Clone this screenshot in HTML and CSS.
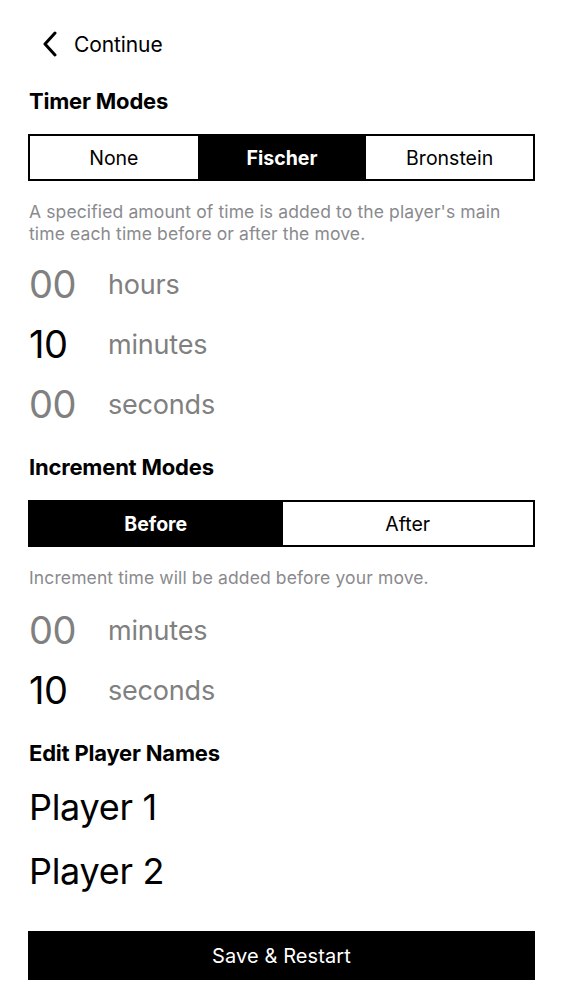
FILE: index.html
```html
<!DOCTYPE html>
<html lang="en">
<head>
<meta charset="utf-8">
<title>Settings</title>
<link rel="stylesheet" href="styles.css">
</head>
<body>
<div class="screen">
  <header class="nav">
    <svg class="chevron" width="18" height="26" viewBox="0 0 18 26" aria-hidden="true">
      <path d="M14 2 L4 13 L14 24" fill="none" stroke="#000" stroke-width="3" stroke-linecap="round" stroke-linejoin="round"/>
    </svg>
    <span class="nav-title">Continue</span>
  </header>

  <h2 class="section-title first">Timer Modes</h2>
  <div class="segmented three">
    <div class="seg">None</div>
    <div class="seg active">Fischer</div>
    <div class="seg">Bronstein</div>
  </div>
  <p class="desc">A specified amount of time is added to the player's main time each time before or after the move.</p>

  <div class="rows rows-main">
    <div class="row"><span class="num muted">00</span><span class="unit">hours</span></div>
    <div class="row"><span class="num">10</span><span class="unit">minutes</span></div>
    <div class="row"><span class="num muted">00</span><span class="unit">seconds</span></div>
  </div>

  <h2 class="section-title title-gap">Increment Modes</h2>
  <div class="segmented two">
    <div class="seg active">Before</div>
    <div class="seg">After</div>
  </div>
  <p class="desc">Increment time will be added before your move.</p>

  <div class="rows rows-inc">
    <div class="row"><span class="num muted">00</span><span class="unit">minutes</span></div>
    <div class="row"><span class="num">10</span><span class="unit">seconds</span></div>
  </div>

  <h2 class="section-title title-gap">Edit Player Names</h2>
  <div class="players">
    <div class="player">Player 1</div>
    <div class="player">Player 2</div>
  </div>

  <button class="save">Save &amp; Restart</button>
</div>
</body>
</html>
```

FILE: styles.css
```css
* { box-sizing: border-box; }
html, body { margin: 0; padding: 0; background: #fff; }
body {
  font-family: Inter, "Noto Sans", "Liberation Sans", sans-serif;
  color: #000;
}
.screen {
  width: 563px;
  padding: 0 28px 0 28px;
}
.nav {
  height: 88px;
  display: flex;
  align-items: center;
  padding-left: 13px;
}
.chevron { display: block; margin-right: 15px; }
.nav-title { font-size: 21px; font-weight: 400; letter-spacing: -0.1px; }

.section-title {
  margin: 2px 0 0 1px;
  height: 24px;
  line-height: 24px;
  font-size: 22px;
  font-weight: 700;
  letter-spacing: -0.2px;
}
.section-title.first { margin-top: 1px; }
.title-gap { margin-top: 21px; }

.segmented {
  margin-top: 21px;
  display: grid;
  height: 47px;
  border: 2px solid #000;
}
.segmented.three { grid-template-columns: 1fr 1fr 1fr; }
.segmented.two { grid-template-columns: 1fr 1fr; }
.seg {
  display: flex;
  align-items: center;
  justify-content: center;
  font-size: 19.5px;
  border-left: 1.5px solid #000;
}
.seg:first-child { border-left: 0; }
.seg.active { background: #000; color: #fff; font-weight: 700; }

.desc {
  margin: 20px 0 0 1px;
  font-size: 17.5px;
  line-height: 22px;
  color: #8a8a8e;
  letter-spacing: 0.12px;
}

.rows-main { margin-top: 9px; }
.rows-inc { margin-top: 11px; }
.row {
  height: 60px;
  display: flex;
  align-items: center;
  padding-left: 1px;
}
.num {
  width: 79px;
  font-size: 38px;
  font-weight: 400;
  letter-spacing: -0.5px;
}
.num.muted { color: #808080; }
.unit {
  font-size: 27px;
  color: #808080;
  letter-spacing: -0.2px;
}

.players { margin-top: 10px; }
.player {
  height: 64px;
  display: flex;
  align-items: center;
  font-size: 36px;
  padding-left: 1px;
  letter-spacing: -0.3px;
}

.save {
  margin-top: 28px;
  width: 100%;
  height: 49px;
  background: #000;
  color: #fff;
  border: 0;
  font-family: inherit;
  font-size: 20px;
  letter-spacing: 0.1px;
}
```
